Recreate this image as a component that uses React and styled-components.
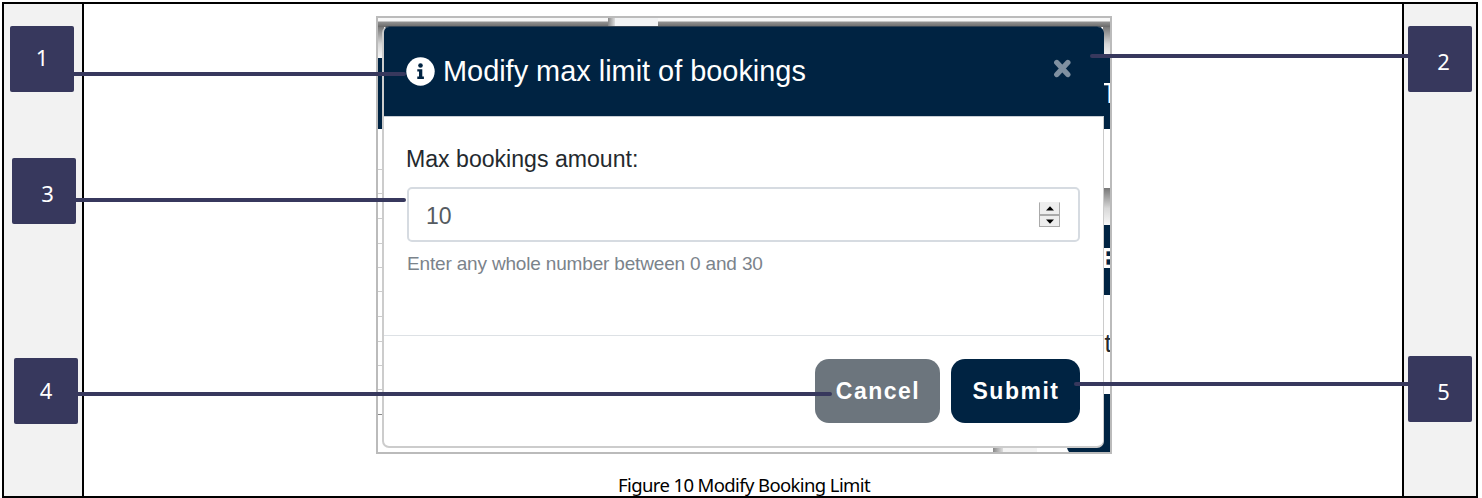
import React from "react";
import styled, { createGlobalStyle } from "styled-components";

const navy = "#002342";
const indigo = "#37385d";

const GlobalStyle = createGlobalStyle`
  *, *::before, *::after { box-sizing: border-box; }
  body { margin: 0; background: #fff; font-family: "Liberation Sans", Arial, sans-serif; }
`;

const Page = styled.main`
  width: 1482px;
  height: 498px;
  padding: 2px 4px 0 2px;
  overflow: hidden;
`;

const Figure = styled.div`
  display: grid;
  grid-template-columns: 78px 1318px 72px;
  grid-template-rows: 492px;
  column-gap: 2px;
  height: 496px;
  border: 2px solid #000;
  background: #000;
`;

const Rail = styled.aside`
  display: flex;
  flex-direction: column;
  padding-top: 22px;
  background: #f2f2f2;
`;

const Marker = styled.div`
  position: relative;
  display: flex;
  justify-content: center;
  flex: none;
  width: 64px;
  height: 66px;
  margin: ${(p) => p.$gap || 0}px 0 0 ${(p) => p.$indent}px;
  padding: ${(p) => p.$drop}px 0 0 ${(p) => p.$shift || 0}px;
  border-radius: 2px;
  background: ${indigo};
  color: #fff;
  font: 22px/30px "Noto Sans", sans-serif;
`;

const Connector = styled.span`
  position: absolute;
  z-index: 3;
  top: ${(p) => p.$top}px;
  ${(p) => (p.$toLeft ? "right" : "left")}: 100%;
  width: ${(p) => p.$length}px;
  height: 4px;
  border-radius: ${(p) => (p.$toLeft ? "2px 0 0 2px" : "0 2px 2px 0")};
  background: ${indigo};
`;

const Stage = styled.figure`
  display: flex;
  flex-direction: column;
  align-items: center;
  margin: 0;
  padding: 12px 0 0 2px;
  background: #fff;
`;

const Shot = styled.div`
  position: relative;
  flex: none;
  width: 736px;
  height: 438px;
  padding: 8px 6px 4px 4px;
  border: 2px solid #bbb;
  background: #fff;
  overflow: hidden;
`;

const Behind = styled.div`
  position: absolute;
  inset: 0;
  display: flex;
  flex-direction: column;
`;

const TopEdge = styled.div`
  display: flex;
  height: 9px;
  flex: none;
`;

const Shade = styled.div`
  width: ${(p) => p.$w}px;
  background: linear-gradient(#f8f8f8 0 3px, #929292 4px, #686868 9px);
`;

const Gap = styled.div`
  width: ${(p) => p.$w}px;
  background: ${(p) => p.$fill};
`;

const Sides = styled.div`
  display: flex;
  justify-content: space-between;
  flex: 1;
`;

const Strip = styled.div`
  display: flex;
  flex-direction: column;
  width: ${(p) => p.$w}px;
`;

const Block = styled.div`
  flex: none;
  height: ${(p) => p.$h}px;
  padding-top: ${(p) => p.$pad || 0}px;
  background: ${(p) => p.$fill};
  color: ${(p) => p.$ink || "#fff"};
  font-size: ${(p) => p.$size || 25}px;
  line-height: 28px;
  font-weight: ${(p) => (p.$bold ? 700 : 400)};
  text-indent: ${(p) => p.$indent || 0}px;
  white-space: nowrap;
  overflow: hidden;
`;

const Tick = styled.div`
  flex: none;
  height: 1px;
  margin-top: ${(p) => p.$gap}px;
  background: ${(p) => (p.$dark ? "#888" : "#ccc")};
`;

const BottomEdge = styled.div`
  position: absolute;
  bottom: 0;
  right: 0;
  display: flex;
  height: 12px;
`;

const Dialog = styled.section`
  position: relative;
  z-index: 1;
  display: flex;
  flex-direction: column;
  width: 722px;
  height: 422px;
  border: 2px solid #ccc;
  border-width: 1px 1px 2px 2px;
  border-top-color: #345;
  border-radius: 7px;
  background: #fff;
`;

const Header = styled.header`
  display: flex;
  align-items: center;
  flex: none;
  height: 90px;
  margin-right: -1px;
  padding: 0 33px 0 22px;
  border-bottom: 1px solid #c7cdd4;
  border-radius: 5px 6px 0 0;
  background: ${navy};
  color: #fff;
`;

const Title = styled.h1`
  flex: 1;
  margin: 0 0 1px 8px;
  font-size: 28.9px;
  line-height: 34px;
  font-weight: 400;
  white-space: nowrap;
`;

const Dismiss = styled.span`
  display: flex;
  padding-bottom: 6px;
`;

const Body = styled.div`
  flex: none;
  height: 218px;
  padding: 25px 23px 0 22px;
`;

const Label = styled.label`
  display: block;
  color: #24292e;
  font-size: 23.1px;
  line-height: 34px;
`;

const Field = styled.div`
  display: flex;
  align-items: center;
  justify-content: space-between;
  height: 55px;
  margin: 11px 0 0 1px;
  padding: 0 18px 0 17px;
  border: 2px solid #d6dbe1;
  border-radius: 5px;
  color: #555b61;
  font-size: 23px;
  line-height: 28px;
`;

const Value = styled.span`
  padding-top: 2px;
`;

const Stepper = styled.div`
  display: grid;
  grid-template-rows: 11px 10px;
  row-gap: 2px;
  width: 21px;
  height: 25px;
  border: 1px solid #aaa;
  border-top-color: #eee;
  background: #aaa;
`;

const Step = styled.span`
  display: flex;
  align-items: center;
  justify-content: center;
  background: #eee;
`;

const Hint = styled.p`
  margin: 10px 0 0 1px;
  color: #7b838b;
  font-size: 19px;
  line-height: 23px;
  letter-spacing: -0.17px;
  white-space: nowrap;
`;

const Footer = styled.footer`
  display: flex;
  justify-content: flex-end;
  gap: 11px;
  flex: 1;
  padding: 23px 23px 0;
  border-top: 1px solid #dde1e5;
`;

const Button = styled.button`
  width: ${(p) => p.$w}px;
  height: 64px;
  padding: 0 0 1px 1px;
  border: 0;
  border-radius: 14px;
  background: ${(p) => p.$fill};
  color: #fff;
  font: 700 23px/28px "Liberation Sans", Arial, sans-serif;
  letter-spacing: 1.5px;
`;

const Caption = styled.figcaption`
  margin-top: 20px;
  color: #000;
  font: 18.5px/22px "Noto Sans", sans-serif;
  letter-spacing: -0.61px;
  white-space: nowrap;
`;

const InfoIcon = () => (
  <svg width="29" height="29" viewBox="0 0 29 29" aria-hidden="true">
    <circle cx="14.5" cy="14.5" r="14.2" fill="#fff" />
    <circle cx="14.5" cy="8.5" r="2.3" fill={navy} />
    <path d="M11.3 12.2h5v7.3h1.6v2.4h-6.6v-2.4h1.7v-4.9h-1.7z" fill={navy} />
  </svg>
);

const CloseIcon = () => (
  <svg width="18" height="19" viewBox="0 0 18 19" aria-hidden="true">
    <path d="M3.8 3.5l11 12M14.8 3.5L3.8 15.5" stroke="#7f90a1" strokeWidth="5.4" strokeLinecap="round" />
  </svg>
);

const Arrow = ({ down }) => (
  <svg width="8" height="5" viewBox="0 0 8 5" aria-hidden="true">
    <path d={down ? "M0 0.5h8L4 4.7z" : "M0 4.5h8L4 0.3z"} fill="#000" />
  </svg>
);

const haze = "linear-gradient(#777, #d8d8d8 55%, #f8f8f8)";

export default function App() {
  return (
    <>
      <GlobalStyle />
      <Page>
        <Figure>
          <Rail>
            <Marker $indent={6} $drop={16}>1<Connector $top={46} $length={332} /></Marker>
            <Marker $indent={8} $gap={66} $drop={20} $shift={7}>3<Connector $top={40} $length={330} /></Marker>
            <Marker $indent={10} $gap={134} $drop={17}>4<Connector $top={34} $length={754} /></Marker>
          </Rail>
          <Stage>
            <Shot>
              <Behind>
                <TopEdge>
                  <Shade $w={230} />
                  <Gap $w={7} $fill="linear-gradient(90deg, #888, #ddd)" />
                  <Gap $w={43} $fill="#f2f3f4" />
                  <Shade $w={452} />
                </TopEdge>
                <Sides>
                  <Strip $w={6}>
                    <Block $h={31} $fill={haze} />
                    <Block $h={71} $fill={navy} />
                    <Tick $gap={40} /><Tick $gap={23} /><Tick $gap={24} />
                    <Tick $gap={24} /><Tick $gap={23} /><Tick $gap={23} />
                    <Tick $gap={24} /><Tick $gap={24} /><Tick $gap={23} />
                    <Tick $gap={23} /><Tick $gap={24} $dark />
                  </Strip>
                  <Strip $w={7}>
                    <Block $h={31} $fill={haze} />
                    <Block $h={71} $fill={navy} $pad={21} $indent={-2} $size={29}>T</Block>
                    <Block $h={59} $fill="#fff" />
                    <Block $h={37} $fill={haze} />
                    <Block $h={70} $fill={navy} $pad={19} $indent={-3} $size={30} $bold>E</Block>
                    <Block $h={99} $fill="#fff" $pad={34} $indent={-11} $ink="#24292e">st</Block>
                    <Block $h={60} $fill={navy} />
                  </Strip>
                </Sides>
              </Behind>
              <BottomEdge>
                <Gap $w={10} $fill="linear-gradient(90deg, #888, #ddd)" />
                <Gap $w={34} $fill="#f4f4f4" />
                <Gap $w={29} $fill="#fff" />
                <svg width="44" height="12" aria-hidden="true"><path d="M0 0H44V12H3Q0 8 0 0Z" fill={navy} /></svg>
              </BottomEdge>
              <Dialog>
                <Header>
                  <InfoIcon />
                  <Title>Modify max limit of bookings</Title>
                  <Dismiss><CloseIcon /></Dismiss>
                </Header>
                <Body>
                  <Label>Max bookings amount:</Label>
                  <Field>
                    <Value>10</Value>
                    <Stepper>
                      <Step><Arrow /></Step>
                      <Step><Arrow down /></Step>
                    </Stepper>
                  </Field>
                  <Hint>Enter any whole number between 0 and 30</Hint>
                </Body>
                <Footer>
                  <Button $w={125} $fill="#6c757d">Cancel</Button>
                  <Button $w={129} $fill={navy}>Submit</Button>
                </Footer>
              </Dialog>
            </Shot>
            <Caption>Figure 10 Modify Booking Limit</Caption>
          </Stage>
          <Rail>
            <Marker $indent={4} $drop={20} $shift={7}>2<Connector $toLeft $top={28} $length={318} /></Marker>
            <Marker $indent={4} $gap={264} $drop={20} $shift={7}>5<Connector $toLeft $top={26} $length={334} /></Marker>
          </Rail>
        </Figure>
      </Page>
    </>
  );
}
